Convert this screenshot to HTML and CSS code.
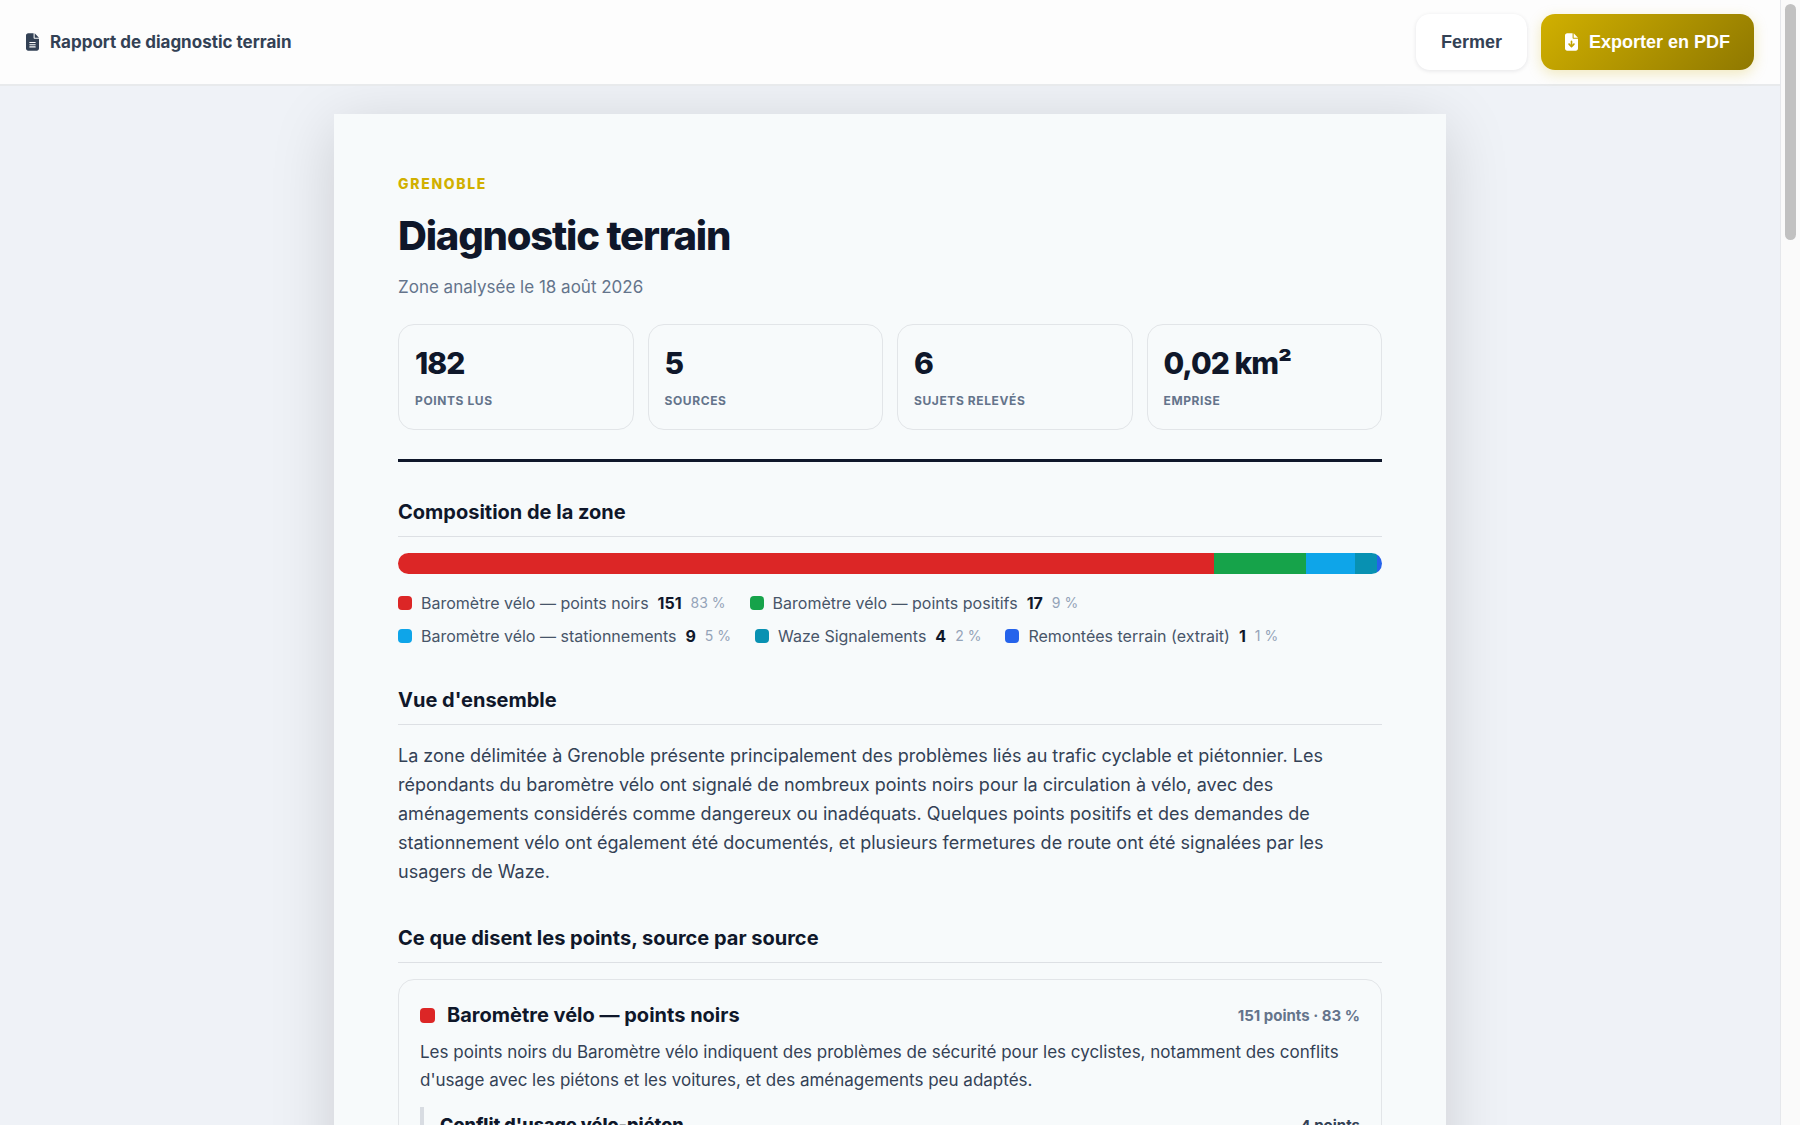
FILE: index.html
```html
<!DOCTYPE html>
<html lang="fr">
<head>
    <meta charset="UTF-8">
    <meta name="viewport" content="width=device-width, initial-scale=1.0">
    <title>Rapport de diagnostic terrain</title>
    <link rel="stylesheet" href="styles.css">
</head>
<body>

    <div class="viewer">
        <!-- Barre d'outils -->
        <header class="toolbar">
            <div class="toolbar-title">
                <svg class="icon" viewBox="0 0 384 512" aria-hidden="true">
                    <path fill="currentColor" d="M64 0C28.700 0 0 28.700 0 64v384c0 35.300 28.700 64 64 64h256c35.300 0 64-28.700 64-64V160H256c-17.700 0-32-14.300-32-32V0H64zm192 0v128h128L256 0zM112 256h160c8.800 0 16 7.200 16 16s-7.200 16-16 16H112c-8.800 0-16-7.200-16-16s7.200-16 16-16zm0 64h160c8.800 0 16 7.200 16 16s-7.200 16-16 16H112c-8.800 0-16-7.200-16-16s7.200-16 16-16zm0 64h160c8.800 0 16 7.200 16 16s-7.200 16-16 16H112c-8.800 0-16-7.200-16-16s7.200-16 16-16z"/>
                </svg>
                <span>Rapport de diagnostic terrain</span>
            </div>
            <div class="toolbar-actions">
                <button type="button" class="btn btn-close">Fermer</button>
                <button type="button" class="btn btn-export">
                    <svg class="icon" viewBox="0 0 384 512" aria-hidden="true">
                        <path fill="currentColor" d="M64 0C28.700 0 0 28.700 0 64v384c0 35.300 28.700 64 64 64h256c35.300 0 64-28.700 64-64V160H256c-17.700 0-32-14.300-32-32V0H64zm192 0v128h128L256 0zM216 232v102.100l31-31c9.400-9.400 24.600-9.400 33.900 0s9.400 24.600 0 33.900l-72 72c-9.400 9.400-24.600 9.400-33.900 0l-72-72c-9.400-9.400-9.400-24.600 0-33.900s24.600-9.400 33.900 0l31 31V232c0-13.300 10.700-24 24-24s24 10.700 24 24z"/>
                    </svg>
                    Exporter en PDF
                </button>
            </div>
        </header>

        <main class="stage">
            <article class="paper">
                <!-- En-tête du rapport -->
                <header class="report-head">
                    <p class="report-city">Grenoble</p>
                    <h1>Diagnostic terrain</h1>
                    <p class="report-date">Zone analysée le 18 août 2026</p>
                    <div class="stats">
                        <div class="stat">
                            <strong>182</strong>
                            <span>Points lus</span>
                        </div>
                        <div class="stat">
                            <strong>5</strong>
                            <span>Sources</span>
                        </div>
                        <div class="stat">
                            <strong>6</strong>
                            <span>Sujets relevés</span>
                        </div>
                        <div class="stat">
                            <strong>0,02 km²</strong>
                            <span>Emprise</span>
                        </div>
                    </div>
                </header>

                <!-- Composition -->
                <section class="section">
                    <h2>Composition de la zone</h2>
                    <div class="bar">
                        <span class="red" style="width: 82.97%"></span>
                        <span class="green" style="width: 9.34%"></span>
                        <span class="sky" style="width: 4.94%"></span>
                        <span class="cyan" style="width: 2.2%"></span>
                        <span class="blue" style="width: 0.55%"></span>
                    </div>
                    <ul class="legend">
                        <li><i class="dot red"></i>Baromètre vélo — points noirs <b>151</b> <em>83 %</em></li>
                        <li><i class="dot green"></i>Baromètre vélo — points positifs <b>17</b> <em>9 %</em></li>
                        <li><i class="dot sky"></i>Baromètre vélo — stationnements <b>9</b> <em>5 %</em></li>
                        <li><i class="dot cyan"></i>Waze Signalements <b>4</b> <em>2 %</em></li>
                        <li><i class="dot blue"></i>Remontées terrain (extrait) <b>1</b> <em>1 %</em></li>
                    </ul>
                </section>

                <!-- Vue d'ensemble -->
                <section class="section">
                    <h2>Vue d'ensemble</h2>
                    <p class="overview">La zone délimitée à Grenoble présente principalement des problèmes liés au trafic cyclable et piétonnier. Les répondants du baromètre vélo ont signalé de nombreux points noirs pour la circulation à vélo, avec des aménagements considérés comme dangereux ou inadéquats. Quelques points positifs et des demandes de stationnement vélo ont également été documentés, et plusieurs fermetures de route ont été signalées par les usagers de Waze.</p>
                </section>

                <!-- Détail par source -->
                <section class="section">
                    <h2>Ce que disent les points, source par source</h2>
                    <div class="source">
                        <div class="source-head">
                            <i class="dot dot-large red"></i>
                            <h3>Baromètre vélo — points noirs</h3>
                            <span class="count">151 points · 83 %</span>
                        </div>
                        <p class="source-text">Les points noirs du Baromètre vélo indiquent des problèmes de sécurité pour les cyclistes, notamment des conflits d'usage avec les piétons et les voitures, et des aménagements peu adaptés.</p>
                        <div class="topic">
                            <h4>Conflit d'usage vélo-piéton</h4>
                            <span class="count">4 points</span>
                        </div>
                    </div>
                </section>
            </article>
        </main>
    </div>

    <div class="scrollbar" aria-hidden="true">
        <div class="thumb"></div>
    </div>

</body>
</html>
```

FILE: styles.css
```css
* {
    box-sizing: border-box;
}

body {
    margin: 0;
    height: 100vh;
    display: flex;
    overflow: hidden;
    font-family: 'Inter', sans-serif;
    color: #0f172a;
    background-color: #eff2f7;
}

h1, h2, h3, h4, p, ul {
    margin: 0;
    padding: 0;
}

.viewer {
    flex: 1;
    min-width: 0;
    display: flex;
    flex-direction: column;
}

/* Barre d'outils */
.toolbar {
    flex-shrink: 0;
    display: flex;
    align-items: center;
    justify-content: space-between;
    padding: 14px 26px;
    background-color: #fdfdfd;
    border-bottom: 2px solid #e8eaec;
}

.toolbar-title {
    display: flex;
    align-items: center;
    gap: 11px;
    font-size: 17px;
    line-height: 20px;
    font-weight: 700;
    color: #334155;
}

.toolbar-actions {
    display: flex;
    gap: 14px;
}

.icon {
    width: 13px;
    height: 18px;
    flex-shrink: 0;
}

.btn {
    display: flex;
    align-items: center;
    gap: 11px;
    height: 56px;
    padding: 0 24px;
    border: none;
    border-radius: 14px;
    font-family: 'Liberation Sans', Arial, sans-serif;
    font-size: 18px;
    font-weight: bold;
    cursor: pointer;
}

.btn-close {
    background-color: #fff;
    color: #334155;
    padding: 0 25px;
    box-shadow: 0 1px 4px rgba(15, 23, 42, 0.1);
}

.btn-export {
    background: linear-gradient(135deg, #d1b000, #8f7800);
    color: #fff;
    box-shadow: 0 4px 14px rgba(209, 176, 0, 0.25);
}

/* Feuille */
.stage {
    flex: 1;
    min-height: 0;
    overflow: hidden;
    padding: 28px 24px;
}

.paper {
    max-width: 1112px;
    min-height: 100%;
    margin: 0 auto;
    padding: 60px 64px;
    background-color: #f7fafb;
    box-shadow: 0 12px 60px rgba(0, 0, 0, 0.15);
}

.report-head {
    padding-bottom: 29px;
    border-bottom: 3px solid #0f172a;
}

.report-city {
    font-size: 14px;
    line-height: 20px;
    font-weight: 800;
    letter-spacing: 0.12em;
    text-transform: uppercase;
    color: #d1b000;
}

h1 {
    margin-top: 17px;
    font-size: 40px;
    line-height: 50px;
    font-weight: 800;
    letter-spacing: -0.03em;
}

.report-date {
    margin-top: 12px;
    font-size: 17px;
    line-height: 28px;
    color: #64748b;
}

.stats {
    display: grid;
    grid-template-columns: repeat(4, 1fr);
    gap: 14px;
    margin-top: 23px;
}

.stat {
    display: flex;
    flex-direction: column;
    gap: 10px;
    padding: 20px 16px 18px;
    border: 1px solid #e2e5e8;
    border-radius: 16px;
}

.stat strong {
    font-size: 30px;
    line-height: 36px;
    font-weight: 800;
    letter-spacing: -1px;
}

.stat span {
    font-size: 12px;
    line-height: 20px;
    font-weight: 700;
    letter-spacing: 0.05em;
    text-transform: uppercase;
    color: #64748b;
}

.section {
    margin-top: 36px;
}

h2 {
    padding-bottom: 9px;
    margin-bottom: 16px;
    border-bottom: 1px solid #dde0e4;
    font-size: 20px;
    line-height: 29px;
    font-weight: 700;
}

/* Composition */
.bar {
    display: flex;
    height: 21px;
    border-radius: 11px;
    overflow: hidden;
}

.red {
    background-color: #dc2626;
}

.green {
    background-color: #16a34a;
}

.sky {
    background-color: #0ea5e9;
}

.cyan {
    background-color: #0891b2;
}

.blue {
    background-color: #2563eb;
}

.legend {
    display: flex;
    flex-wrap: wrap;
    gap: 9px 24px;
    margin: 17px 0 38px;
    list-style: none;
}

.legend li {
    display: flex;
    align-items: center;
    gap: 9px;
    font-size: 16px;
    line-height: 24px;
    color: #475569;
}

.legend b {
    font-weight: 700;
    color: #0f172a;
}

.legend em {
    font-size: 14px;
    font-style: normal;
    color: #94a3b8;
}

.dot {
    width: 14px;
    height: 14px;
    border-radius: 4px;
    flex-shrink: 0;
}

.dot-large {
    width: 15px;
    height: 15px;
}

.overview {
    margin-bottom: 38px;
    font-size: 18px;
    line-height: 29px;
    color: #334155;
}

/* Sources */
.source {
    padding: 21px;
    border: 1px solid #e2e5e8;
    border-radius: 16px;
}

.source-head {
    display: flex;
    align-items: center;
    gap: 12px;
}

h3 {
    font-size: 20px;
    line-height: 28px;
    font-weight: 700;
}

.count {
    margin-left: auto;
    font-size: 15px;
    font-weight: 700;
    color: #64748b;
}

.source-text {
    margin-top: 9px;
    font-size: 17px;
    line-height: 28px;
    color: #334155;
}

.topic {
    display: flex;
    align-items: center;
    margin-top: 13px;
    padding: 4px 0 4px 16px;
    border-left: 4px solid #d8dce2;
}

h4 {
    font-size: 18px;
    line-height: 28px;
    font-weight: 800;
}

.topic .count {
    color: #334155;
}

/* Barre de défilement */
.scrollbar {
    width: 20px;
    padding: 4px;
    background-color: #fafafa;
    border-left: 1px solid #e5e7eb;
}

.thumb {
    width: 11px;
    height: 21vh;
    border-radius: 6px;
    background-color: #c1c1c1;
}
```
